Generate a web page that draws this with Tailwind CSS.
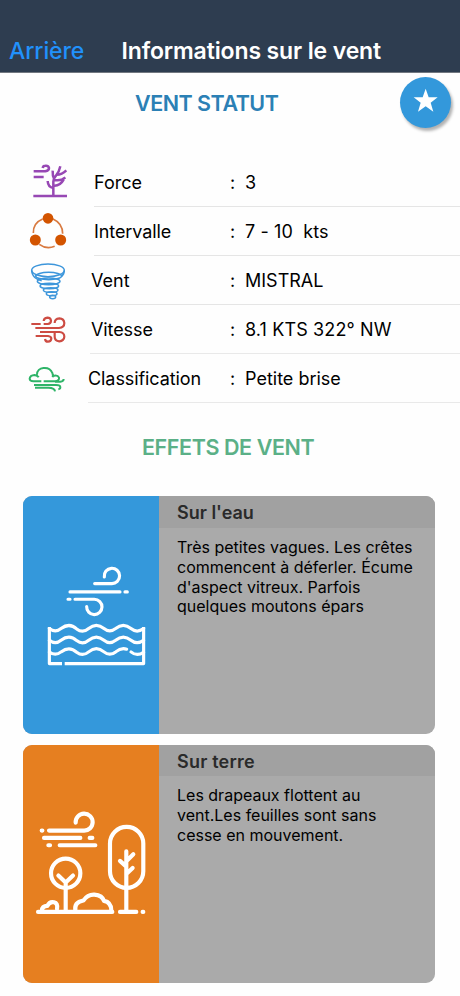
<!DOCTYPE html>
<html lang="fr">
<head>
<meta charset="utf-8">
<title>Informations sur le vent</title>
<script src="https://cdn.jsdelivr.net/npm/@tailwindcss/browser@4"></script>
</head>
<body class="bg-[#fefefe] font-['Inter','Liberation_Sans',sans-serif] text-black">
<div class="w-[460px] h-[996px] overflow-hidden flex flex-col">
  <header class="h-[73px] shrink-0 bg-[#2e3d50] border-b border-[#727880] pt-[36px] flex items-start leading-[30px] whitespace-nowrap">
    <a class="w-[112.5px] pl-[9px] text-[23px] font-medium tracking-[-0.1px] text-[#2191fb]">Arrière</a>
    <h1 class="pl-[9px] text-[23px] font-semibold tracking-[-0.13px] text-white">Informations sur le vent</h1>
  </header>

  <div class="h-[85px] shrink-0 flex items-start">
    <h2 class="w-[400px] pl-[135px] pt-[15px] leading-[30px] text-[21.5px] font-semibold tracking-[-0.5px] text-[#2b80b5] whitespace-nowrap">VENT STATUT</h2>
    <button class="mt-[4px] size-[51px] shrink-0 rounded-full bg-[#3398db] shadow-[2px_3px_3px_rgba(0,0,0,0.3)] flex items-center justify-center">
      <svg class="size-[51px]" viewBox="1200 171 153 153"><path d="M1277 206L1286 232H1313L1292 248L1300 275L1277 259L1254 275L1262 248L1241 232H1268Z" fill="#fff"/></svg>
    </button>
  </div>

  <section class="shrink-0 text-[18px] whitespace-nowrap">
    <div class="h-[49px] flex">
      <div class="w-[94px] pl-5 shrink-0"><svg class="w-[60px] h-[49px]" viewBox="0 9 180 147" fill="none" stroke="#9748b4" stroke-width="7.5">
        <path d="M40 123H141M100 123V80Q101 69 110 59Q117 51 121 34M103 73Q97 62 98 47M100 99Q84 97 83 78M100 92Q120 94 131 74M110 59Q126 59 139 46M104 75Q124 78 136 67"/>
        <path d="M41 49H76Q87 47 87 39Q85 31 76 32Q69 32 68 39M41 66H71"/></svg></div>
      <div class="flex-1 border-b border-[#e5e5e5] flex items-center"><span class="w-[136px]">Force</span><span class="w-[15px]">:</span><span>3</span></div>
    </div>
    <div class="h-[49px] flex">
      <div class="w-[94px] pl-5 shrink-0"><svg class="w-[60px] h-[49px]" viewBox="0 156 180 147" fill="none" stroke="#d97a40" stroke-width="5">
        <path d="M68 192Q39 204 40 234M99 192Q128 205 128 236M58 268Q79 284 104 274"/>
        <g fill="#d35400" stroke="none"><circle cx="84" cy="190" r="16"/><circle cx="46" cy="255" r="16.5"/><circle cx="122" cy="255" r="16.5"/></g></svg></div>
      <div class="flex-1 border-b border-[#e5e5e5] flex items-center"><span class="w-[136px] tracking-[-0.1px]">Intervalle</span><span class="w-[15px]">:</span><span class="whitespace-pre tracking-[0.1px]">7 - 10  kts</span></div>
    </div>
    <div class="h-[49px] flex">
      <div class="w-[90px] pl-5 shrink-0"><svg class="w-[60px] h-[49px]" viewBox="0 18 180 147" fill="none" stroke="#3d96db" stroke-width="4.5">
        <ellipse cx="84" cy="61" rx="49" ry="19"/>
        <path d="M35 61C35 79 50 90 65 92M133 61C133 70 129 76 124 80"/>
        <ellipse cx="86" cy="78" rx="39" ry="11"/><ellipse cx="86" cy="94" rx="34" ry="10"/><ellipse cx="88" cy="108" rx="28" ry="8"/><ellipse cx="92" cy="120" rx="22" ry="7"/><ellipse cx="95" cy="131" rx="16" ry="6"/><ellipse cx="98" cy="141" rx="9" ry="5"/></svg></div>
      <div class="flex-1 border-b border-[#e5e5e5] flex items-center"><span class="w-[140px] pl-px">Vent</span><span class="w-[15px]">:</span><span>MISTRAL</span></div>
    </div>
    <div class="h-[49px] flex">
      <div class="w-[90px] pl-5 shrink-0"><svg class="w-[60px] h-[49px]" viewBox="0 165 180 147" fill="none" stroke="#cd4c43" stroke-width="6.5">
        <path d="M34 222H62M71 222H83Q93 221 93 212Q92 203 82 203Q72 204 71 213M46 234H117Q133 233 133 219Q132 206 118 205Q104 206 104 219M60 246H118Q133 247 133 260Q132 273 118 274Q104 272 104 260V246M47 258H84Q94 259 94 266Q93 275 84 275Q76 275 75 267"/></svg></div>
      <div class="flex-1 border-b border-[#e9e9e9] flex items-center"><span class="w-[140px] pl-px tracking-[-0.1px]">Vitesse</span><span class="w-[15px]">:</span><span class="tracking-[0.13px]">8.1 KTS 322° NW</span></div>
    </div>
    <div class="h-[49px] flex">
      <div class="w-[88px] pl-5 shrink-0"><svg class="w-[60px] h-[49px]" viewBox="0 312 180 147" fill="none" stroke="#2eb468" stroke-width="6">
        <path d="M64 394H41Q29 393 29 386Q30 376 44 375Q53 377 56 382M51 374C50 350 88 346 97 369Q100 375 98 382M71 394H105Q119 391 117 383Q113 374 99 378M105 395H121Q131 394 131 387M42 405H108Q121 405 121 412Q121 417 115 418M45 413H85Q104 413 105 424"/></svg></div>
      <div class="flex-1 border-b border-[#e9e9e9] flex items-center"><span class="w-[142px] tracking-[-0.08px]">Classification</span><span class="w-[15px]">:</span><span>Petite brise</span></div>
    </div>
  </section>

  <h2 class="shrink-0 h-[93px] pt-[29px] pl-[142px] leading-[30px] text-[21.5px] font-semibold tracking-[-0.42px] text-[#5bb087] whitespace-nowrap">EFFETS DE VENT</h2>

  <main class="shrink-0 pl-[23px] flex flex-col gap-[11.5px]">
    <article class="w-[411.5px] h-[237.5px] rounded-[9px] overflow-hidden flex bg-[#aaaaaa]">
      <div class="w-[136px] shrink-0 bg-[#3498db]"><svg class="w-[136px] h-[237.5px]" viewBox="24 33 408 713" fill="none" stroke="#fff" stroke-width="9.500" stroke-linecap="round" stroke-linejoin="round">
        <path d="M239 296H290A23 23 0 1 0 268 276M165 321H315M330 321H337M159 343H165M180 343H238A23 23 0 1 1 215 365"/>
        <path stroke-linecap="butt" d="M103 426V536H141M149 536H386V426"/>
        <path d="M103 431Q121 445 138 431Q163 412 185 432Q203 446 221 431Q244 412 267 431Q284 445 302 431Q325 412 348 431Q366 446 386 431M103 466Q121 480 138 466Q163 447 185 467Q203 481 221 466Q244 447 267 466Q284 480 302 466Q325 447 348 466Q366 481 386 466M103 501Q121 515 138 501Q163 482 185 502Q203 516 221 501Q244 482 267 501Q284 515 302 501Q319 487 335 493M348 501Q366 516 386 502"/></svg></div>
      <div class="flex-1">
        <h3 class="h-[32px] pl-[18px] bg-[#a1a1a1] leading-[33px] text-[18px] font-semibold text-[#2a2a2a]">Sur l'eau</h3>
        <p class="pl-[18px] pt-[10px] text-[16px] leading-[19.8px] whitespace-nowrap">Très petites vagues. Les crêtes<br>commencent à déferler. Écume<br>d'aspect vitreux. Parfois<br>quelques moutons épars</p>
      </div>
    </article>
    <article class="w-[411.5px] h-[237.5px] rounded-[9px] overflow-hidden flex bg-[#aaaaaa]">
      <div class="w-[136px] shrink-0 bg-[#e67f20]"><svg class="w-[136px] h-[237.5px]" viewBox="24 15 408 713" fill="none" stroke="#fff" stroke-width="12.500" stroke-linecap="round" stroke-linejoin="round">
        <path d="M80 272H82M102 272H206A25.500 25.500 0 1 0 182 248M87 294H196M224 294H232M100 316H105M134 316H241"/>
        <circle cx="152" cy="400" r="44"/>
        <path d="M152 514V428M130 407L152 428L174 407M69 516H292M315 516H364M383 516H385"/>
        <path d="M81 512Q81 498 97 498Q103 484 117 487Q129 490 126 507M181 512Q177 487 205 482Q218 463 238 464Q262 466 267 483Q289 487 289 512"/>
        <rect x="285" y="261" width="100" height="183" rx="50"/>
        <path d="M334 514V334M315 363L334 380M355 343L334 364M353 384L334 402"/></svg></div>
      <div class="flex-1">
        <h3 class="h-[31px] pl-[18px] bg-[#a1a1a1] leading-[33px] text-[18px] font-semibold tracking-[0.2px] text-[#2a2a2a]">Sur terre</h3>
        <p class="pl-[18px] pt-[10px] text-[16px] leading-[19.8px] whitespace-nowrap">Les drapeaux flottent au<br>vent.Les feuilles sont sans<br>cesse en mouvement.</p>
      </div>
    </article>
  </main>
</div>
</body>
</html>
